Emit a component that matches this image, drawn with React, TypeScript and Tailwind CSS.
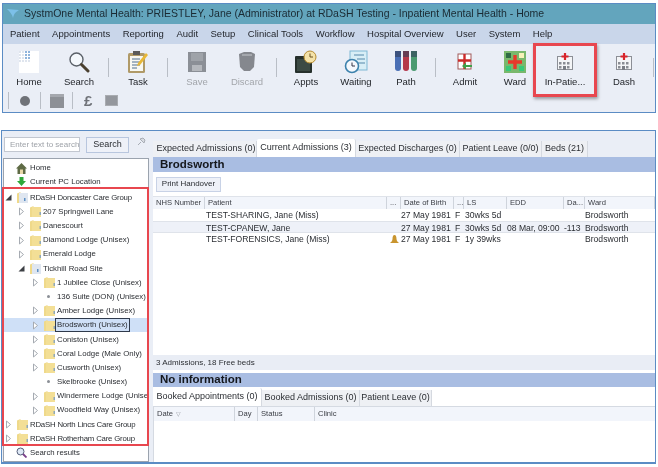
const FONT = "font-['Liberation_Sans',Arial,sans-serif]"

function Sep({ h = 'h-[19px]', mx = 'mx-[4px]' }: { h?: string; mx?: string }) {
  return <div className={`w-px bg-[#b9bec6] shrink-0 ${h} ${mx}`} />
}

function HomeIcon() {
  return (
    <svg width="22" height="24" viewBox="0 0 22 24">
      <rect x="1" y="1" width="20" height="22" fill="#fff" />
      {[1, 4, 7, 10].map((y) => [1, 4, 7, 10].map((x) => (
        <rect key={`${x}-${y}`} x={x} y={y} width="2" height="2" fill={x > 6 && y < 8 ? '#8fb4dc' : '#dfe5ee'} />
      )))}
    </svg>
  )
}

function SearchIcon() {
  return (
    <svg width="22" height="22" viewBox="0 0 22 22">
      <circle cx="8.5" cy="8.5" r="6.5" fill="#f4f8fc" stroke="#5a6068" strokeWidth="1.4" />
      <path d="M13.5 13.5 20 20" stroke="#4a4030" strokeWidth="3" strokeLinecap="round" />
    </svg>
  )
}

function TaskIcon() {
  return (
    <svg width="22" height="24" viewBox="0 0 22 24">
      <rect x="1" y="3" width="17" height="20" rx="1.5" fill="#b09a68" />
      <rect x="3" y="6" width="13" height="15" fill="#f8f8f2" />
      <rect x="6" y="1" width="7" height="4" fill="#5a5a5a" />
      <path d="M5 9h8M5 12h8M5 15h8M5 18h5" stroke="#4f6f8f" strokeWidth="1.2" />
      <path d="M11 13 19 3l2 2-8 10-3 1z" fill="#e8b838" />
    </svg>
  )
}

function SaveIcon() {
  return (
    <svg width="18" height="20" viewBox="0 0 18 20">
      <rect x="0" y="0" width="18" height="20" fill="#8b8f96" />
      <rect x="3" y="1" width="12" height="8" fill="#9fa3a9" />
      <rect x="4" y="13" width="10" height="6" fill="#b5b8bd" />
    </svg>
  )
}

function DiscardIcon() {
  return (
    <svg width="18" height="20" viewBox="0 0 18 20">
      <path d="M1 2 6 0h7l4 2-1 13-4 4H6l-4-4z" fill="#85888e" />
      <path d="M4 3h10" stroke="#a5a8ad" strokeWidth="2" />
    </svg>
  )
}

function ApptsIcon() {
  return (
    <svg width="24" height="24" viewBox="0 0 24 24">
      <rect x="1" y="6" width="17" height="17" rx="1" fill="#26302c" />
      <rect x="3" y="9" width="13" height="12" fill="#3c4a44" />
      <circle cx="16" cy="7" r="6" fill="#f4e2a8" stroke="#b58a30" />
      <path d="M16 3.5V7h3" stroke="#6a5020" strokeWidth="1" fill="none" />
    </svg>
  )
}

function WaitingIcon() {
  return (
    <svg width="24" height="24" viewBox="0 0 24 24">
      <rect x="6" y="1" width="17" height="19" fill="#d8eef6" stroke="#7fb8d4" />
      <path d="M10 5h10M13 9h8M14 13h7" stroke="#5588aa" />
      <circle cx="8" cy="16" r="6.5" fill="#f4f8fc" stroke="#3d82ad" strokeWidth="1.6" />
      <path d="M8 12.5V16h3" stroke="#334" fill="none" />
    </svg>
  )
}

function PathIcon() {
  return (
    <svg width="24" height="24" viewBox="0 0 24 24">
      <path d="M1 1h6v17a3 3 0 0 1-6 0z" fill="#4a6fb5" />
      <path d="M9 1h6v17a3 3 0 0 1-6 0z" fill="#b5384a" />
      <path d="M17 1h6v17a3 3 0 0 1-6 0z" fill="#4a9a70" />
      <path d="M1 1h6v6H1zM9 1h6v6H9zM17 1h6v6h-6z" fill="#33405a" opacity="0.6" />
    </svg>
  )
}

function AdmitIcon() {
  return (
    <svg width="16" height="18" viewBox="0 0 16 18">
      <rect x="1" y="1" width="13" height="15" fill="#fff" stroke="#a05a5a" />
      <path d="M7.5 1v15M1 7.5h13" stroke="#cc2a2a" strokeWidth="2.4" />
      <path d="M15 12H9V9.500L5 13l4 3.500V14h6z" fill="#3fa04a" />
    </svg>
  )
}

function WardIcon() {
  return (
    <svg width="22" height="22" viewBox="0 0 22 22">
      <rect x="0" y="0" width="22" height="22" fill="#79b86c" />
      <rect x="2" y="2" width="5" height="5" fill="#2f6a44" />
      <rect x="15" y="2" width="5" height="5" fill="#f6f2b8" />
      <rect x="2" y="15" width="5" height="5" fill="#38c878" />
      <rect x="15" y="15" width="5" height="5" fill="#38c878" />
      <path d="M11 4v14M4 11h14" stroke="#e8392a" strokeWidth="3.4" />
    </svg>
  )
}

function HospitalIcon() {
  return (
    <svg width="16" height="17" viewBox="0 0 16 17">
      <rect x="0.500" y="3.500" width="15" height="13" fill="#f4f5f7" stroke="#8c8f96" />
      <path d="M8 0v7M4.500 3.500h7" stroke="#d8232a" strokeWidth="2.2" />
      {[2, 6, 10].map((x) => (
        <rect key={x} x={x} y="9" width="2.500" height="2.500" fill="#8a8d94" />
      ))}
      {[2, 10].map((x) => (
        <rect key={x} x={x} y="13" width="2.500" height="2.500" fill="#8a8d94" />
      ))}
      <rect x="6" y="13" width="3" height="4" fill="#7a7d84" />
    </svg>
  )
}

function ToolButton({ label, icon, disabled }: { label: string; icon: React.ReactNode; disabled?: boolean }) {
  return (
    <div className="w-[50px] shrink-0 flex flex-col items-center">
      <div className="h-[29px] flex items-center justify-center">{icon}</div>
      <span className={`text-[9.500px] leading-[12px] whitespace-nowrap ${disabled ? 'text-[#a3a6ab]' : 'text-[#23262b]'}`}>
        {label}
      </span>
    </div>
  )
}

function Folder({ open }: { open?: boolean }) {
  return (
    <svg width="11" height="11" viewBox="0 0 11 11" className="shrink-0">
      <path d="M0 1.500 3.500 0v11H0z" fill="#efd98a" />
      <rect x="2" y="1" width="9" height="10" fill={open ? '#dfe6f0' : '#f3df96'} />
      <rect x={open ? 7 : 9.500} y="6" width="1.500" height="3" fill={open ? '#5d8fc4' : '#8fa8b8'} />
    </svg>
  )
}

function Arrow({ type }: { type: 'closed' | 'open' | 'dot' }) {
  if (type === 'dot') {
    return (
      <span className="w-[9px] shrink-0 flex items-center justify-center">
        <span className="w-[3px] h-[3px] rounded-full bg-[#8b8f96]" />
      </span>
    )
  }
  return (
    <svg width="9" height="9" viewBox="0 0 9 9" className="shrink-0">
      {type === 'closed' ? (
        <path d="M2.500 1 6.500 4.500 2.500 8z" fill="#fff" stroke="#a6abb2" />
      ) : (
        <path d="M7.500 1.500V7.500H1.500z" fill="#3c3f44" />
      )}
    </svg>
  )
}

const TREE: { label: string; ml: string; arrow: 'closed' | 'open' | 'dot'; folder?: boolean; open?: boolean; selected?: boolean }[] = [
  { label: 'RDaSH Doncaster Care Group', ml: 'ml-0 tracking-[-0.2px]', arrow: 'open', folder: true, open: true },
  { label: '207 Springwell Lane', ml: 'ml-[13px]', arrow: 'closed', folder: true },
  { label: 'Danescourt', ml: 'ml-[13px]', arrow: 'closed', folder: true },
  { label: 'Diamond Lodge (Unisex)', ml: 'ml-[13px]', arrow: 'closed', folder: true },
  { label: 'Emerald Lodge', ml: 'ml-[13px]', arrow: 'closed', folder: true },
  { label: 'Tickhill Road Site', ml: 'ml-[13px]', arrow: 'open', folder: true, open: true },
  { label: '1 Jubilee Close (Unisex)', ml: 'ml-[27px]', arrow: 'closed', folder: true },
  { label: '136 Suite (DON) (Unisex)', ml: 'ml-[40px]', arrow: 'dot' },
  { label: 'Amber Lodge (Unisex)', ml: 'ml-[27px]', arrow: 'closed', folder: true },
  { label: 'Brodsworth (Unisex)', ml: 'ml-[27px]', arrow: 'closed', folder: true, selected: true },
  { label: 'Coniston (Unisex)', ml: 'ml-[27px]', arrow: 'closed', folder: true },
  { label: 'Coral Lodge (Male Only)', ml: 'ml-[27px]', arrow: 'closed', folder: true },
  { label: 'Cusworth (Unisex)', ml: 'ml-[27px]', arrow: 'closed', folder: true },
  { label: 'Skelbrooke (Unisex)', ml: 'ml-[40px]', arrow: 'dot' },
  { label: 'Windermere Lodge (Unisex)', ml: 'ml-[27px]', arrow: 'closed', folder: true },
  { label: 'Woodfield Way (Unisex)', ml: 'ml-[27px]', arrow: 'closed', folder: true },
  { label: 'RDaSH North Lincs Care Group', ml: 'ml-0 tracking-[-0.2px]', arrow: 'closed', folder: true },
  { label: 'RDaSH Rotherham Care Group', ml: 'ml-0 tracking-[-0.2px]', arrow: 'closed', folder: true },
]

function TreeRow({ row }: { row: (typeof TREE)[number] }) {
  return (
    <div className={`h-[14.2px] flex items-center whitespace-nowrap overflow-hidden ${row.selected ? 'bg-[#cfe0f7]' : ''}`}>
      <div className={`flex items-center ${row.ml}`}>
        <Arrow type={row.arrow} />
        {row.folder ? (
          <span className="ml-[4px] mr-[2px]">
            <Folder open={row.open} />
          </span>
        ) : (
          <span className="w-[4px]" />
        )}
        <span className={row.selected ? 'border border-[#2f3a4c] px-px leading-[12px] -mx-[2px]' : ''}>{row.label}</span>
      </div>
    </div>
  )
}

const COLS = 'grid grid-cols-[52px_182px_14px_53px_10px_43px_57px_21px_1fr]'

const HEADERS = ['NHS Number', 'Patient', '...', 'Date of Birth', '...', 'LS', 'EDD', 'Da...', 'Ward']

const ROWS = [
  { name: 'TEST-SHARING, Jane (Miss)', ls: '30wks 5d', edd: '', da: '', alt: false, bell: false },
  { name: 'TEST-CPANEW, Jane', ls: '30wks 5d', edd: '08 Mar, 09:00', da: '-113', alt: true, bell: false },
  { name: 'TEST-FORENSICS, Jane (Miss)', ls: '1y 39wks', edd: '', da: '', alt: false, bell: true },
]

function Tab({ label, active, w }: { label: string; active?: boolean; w: string }) {
  return (
    <div
      className={`${w} shrink-0 flex items-center justify-center whitespace-nowrap border-r border-[#d5d9e0] ${
        active ? 'bg-white h-[18px] -mt-[1px] rounded-t-[2px]' : 'bg-[#eef0f4] h-[16px] mt-[1px]'
      }`}
    >
      {label}
    </div>
  )
}

export default function App() {
  return (
    <div className={`relative w-[658px] h-[467px] bg-white overflow-hidden text-[#2b2e33] blur-[0.3px] ${FONT}`}>
      {/* main toolbar window */}
      <div className="mt-[3px] mx-[2px] h-[110px] border border-[#5b8cc4] bg-[#eaeef6] flex flex-col">
        <div className="h-[20px] bg-[#63a5bd] flex items-center shrink-0">
          <svg width="14" height="12" viewBox="0 0 14 12" className="ml-[3px]">
            <path d="M1 1c4 0 7 1 12 1-3 2-5 3-6 8-1-4-3-6-6-9z" fill="#7cc0e8" />
          </svg>
          <span className="ml-[4px] text-[10.500px] text-[#1a2a33] whitespace-nowrap">
            SystmOne Mental Health: PRIESTLEY, Jane (Administrator) at RDaSH Testing - Inpatient Mental Health - Home
          </span>
        </div>
        <div className="h-[20px] bg-[#c9d6ea] flex items-center shrink-0 pl-[7px] gap-[12.500px] text-[9.500px] text-[#1f2228] whitespace-nowrap">
          {['Patient', 'Appointments', 'Reporting', 'Audit', 'Setup', 'Clinical Tools', 'Workflow', 'Hospital Overview', 'User', 'System', 'Help'].map((m) => (
            <span key={m}>{m}</span>
          ))}
        </div>
        <div className="flex items-center pl-[1px] h-[47px] shrink-0">
          <ToolButton label="Home" icon={<HomeIcon />} />
          <ToolButton label="Search" icon={<SearchIcon />} />
          <Sep />
          <ToolButton label="Task" icon={<TaskIcon />} />
          <Sep />
          <ToolButton label="Save" disabled icon={<SaveIcon />} />
          <ToolButton label="Discard" disabled icon={<DiscardIcon />} />
          <Sep />
          <ToolButton label="Appts" icon={<ApptsIcon />} />
          <ToolButton label="Waiting" icon={<WaitingIcon />} />
          <ToolButton label="Path" icon={<PathIcon />} />
          <Sep />
          <ToolButton label="Admit" icon={<AdmitIcon />} />
          <ToolButton label="Ward" icon={<WardIcon />} />
          <ToolButton label="In-Patie..." icon={<HospitalIcon />} />
          <span className="w-[9px] shrink-0" />
          <ToolButton label="Dash" icon={<HospitalIcon />} />
          <Sep />
        </div>
        <div className="flex items-center h-[19px] pl-[5px]">
          <Sep h="h-[17px]" mx="mr-[11px]" />
          <span className="w-[10px] h-[10px] rounded-full bg-[#6f7278]" />
          <Sep h="h-[17px]" mx="ml-[10px] mr-[9px]" />
          <span className="w-[14px] h-[14px] bg-[#8d9096] border-t-[3px] border-[#a5a8ae]" />
          <Sep h="h-[17px]" mx="ml-[8px] mr-[11px]" />
          <span className="w-[9px] text-[15px] font-bold leading-none text-[#6f7278]">£</span>
          <span className="ml-[12px] w-[13px] h-[11px] bg-[#94979d] border border-[#a9acb1]" />
        </div>
      </div>

      {/* inpatient window */}
      <div className="mt-[17px] mx-[1px] w-[655px] h-[334px] border border-[#5b8cc4] border-b-2 bg-[#eaeef6] flex">
        <div className="w-[148px] shrink-0 flex flex-col">
          <div className="h-[27px] flex items-center pl-[2px] shrink-0">
            <div className="w-[76px] h-[15px] bg-white border border-[#c2c7d0] flex items-center pl-[5px] text-[8px] text-[#9ea2a8] whitespace-nowrap">
              Enter text to search
            </div>
            <div className="ml-[6px] w-[43px] h-[16px] bg-[#eef1f8] border border-[#b8c6de] flex items-center justify-center text-[9px]">
              Search
            </div>
            <svg width="9" height="9" viewBox="0 0 9 9" className="ml-[8px] mb-[6px]">
              <path d="M1 8 4 5M3 2l4 4 1-3-2-2z" stroke="#a8adb5" fill="#d8dce2" />
            </svg>
          </div>
          <div className="mx-[1px] flex-1 bg-white border border-[#9ba3ae] pt-[2px] text-[7.800px] overflow-hidden">
            <div className="h-[14.2px] flex items-center pl-[12px]">
              <svg width="11" height="11" viewBox="0 0 11 11" className="mr-[3px]">
                <path d="M5.500 0 11 5.500H9.500V11h-8V5.500H0z" fill="#5f6b45" />
                <rect x="4" y="6.500" width="3" height="4.500" fill="#e8d8a8" />
              </svg>
              Home
            </div>
            <div className="h-[14.2px] mb-[1px] flex items-center pl-[12px]">
              <svg width="11" height="11" viewBox="0 0 11 11" className="mr-[3px]">
                <path d="M3.500 0h4v4H10L5.500 9 1 4h2.500z" fill="#2fa83a" />
                <path d="M1 10.500h9" stroke="#6a6d72" />
              </svg>
              Current PC Location
            </div>
            {TREE.map((row) => (
              <TreeRow key={row.label} row={row} />
            ))}
            <div className="h-[14.2px] flex items-center pl-[12px]">
              <svg width="11" height="11" viewBox="0 0 11 11" className="mr-[3px]">
                <circle cx="4.500" cy="4.500" r="3.500" fill="#dfe9f6" stroke="#55607a" />
                <path d="M7 7l3.500 3.500" stroke="#7a3f8a" strokeWidth="1.800" />
              </svg>
              Search results
            </div>
          </div>
        </div>

        <div className="flex-1 min-w-0 flex flex-col pl-[3px] text-[8.600px]">
          <div className="h-[27px] -mb-[1px] flex items-end shrink-0 text-[9px] text-[#2b2e33]">
            <div className="flex items-start h-[18px]">
              <Tab label="Expected Admissions (0)" w="w-[104px] pl-[3px]" />
              <Tab label="Current Admissions (3)" active w="w-[99px]" />
              <Tab label="Expected Discharges (0)" w="w-[104px]" />
              <Tab label="Patient Leave (0/0)" w="w-[82px]" />
              <Tab label="Beds (21)" w="w-[46px]" />
            </div>
          </div>
          <div className="h-[15px] bg-[#a9bde2] flex items-center pl-[7px] text-[11.500px] font-bold text-[#14171c] shrink-0">
            Brodsworth
          </div>
          <div className="h-[24px] bg-white flex items-center pl-[3px] shrink-0">
            <div className="w-[65px] h-[15px] bg-[#eef1f8] border border-[#c8d2e6] flex items-center justify-center text-[8px] whitespace-nowrap">
              Print Handover
            </div>
          </div>
          <div className="bg-white h-[159px] shrink-0 border-t border-[#dfe3ea]">
            <div className={`${COLS} h-[12px] bg-[#f2f5fb] text-[7.600px] text-[#3a3d44] whitespace-nowrap`}>
              {HEADERS.map((h, i) => (
                <div key={i} className="border-r border-[#cfd4dc] pl-[3px] flex items-center overflow-hidden">
                  {h}
                </div>
              ))}
            </div>
            {ROWS.map((r) => (
              <div key={r.name} className={`${COLS} h-[12px] items-center whitespace-nowrap ${r.alt ? 'bg-[#eef1f8] border-y border-[#dfe3ea]' : ''}`}>
                <div />
                <div className="pl-[1px]">{r.name}</div>
                <div className="flex justify-center">
                  {r.bell && (
                    <svg width="9" height="9" viewBox="0 0 9 9">
                      <path d="M4.500 0C6 0 6.500 2 6.500 4S8 7 9 8H0c1-1 2.500-2 2.500-4S3 0 4.500 0z" fill="#c9952f" />
                    </svg>
                  )}
                </div>
                <div>27 May 1981</div>
                <div className="pl-[1px]">F</div>
                <div className="pl-[1px]">{r.ls}</div>
                <div>{r.edd}</div>
                <div>{r.da}</div>
                <div>Brodsworth</div>
              </div>
            ))}
          </div>
          <div className="h-[15px] bg-[#e9edf5] flex items-center pl-[3px] text-[8px] shrink-0">3 Admissions, 18 Free beds</div>
          <div className="h-[3px] bg-white shrink-0" />
          <div className="h-[14px] bg-[#a9bde2] flex items-center pl-[7px] text-[11.500px] font-bold text-[#14171c] shrink-0">
            No information
          </div>
          <div className="h-[19px] pt-[2px] flex items-start bg-white text-[9px] shrink-0">
            <Tab label="Booked Appointments (0)" active w="w-[109px]" />
            <Tab label="Booked Admissions (0)" w="w-[98px]" />
            <Tab label="Patient Leave (0)" w="w-[72px]" />
          </div>
          <div className="flex-1 bg-white border-t border-l border-[#d5dae2]">
            <div className="grid grid-cols-[81px_23px_57px_1fr] h-[14px] bg-[#f2f5fb] text-[7.600px] text-[#3a3d44]">
              <div className="border-r border-[#cfd4dc] pl-[3px] flex items-center gap-[3px]">
                Date
                <span className="text-[6px] text-[#9a9ea5]">▽</span>
              </div>
              <div className="border-r border-[#cfd4dc] pl-[3px] flex items-center">Day</div>
              <div className="border-r border-[#cfd4dc] pl-[3px] flex items-center">Status</div>
              <div className="pl-[3px] flex items-center">Clinic</div>
            </div>
          </div>
        </div>
      </div>

      {/* red highlight boxes */}
      <div className="absolute left-[533px] top-[43px] w-[64px] h-[54px] border-[3px] border-[#e8474f] shadow-[1px_2px_3px_rgba(0,0,0,0.35)]" />
      <div className="absolute left-[2px] top-[187px] w-[147px] h-[259px] border-[2px] border-[#e8474f]" />
    </div>
  )
}
